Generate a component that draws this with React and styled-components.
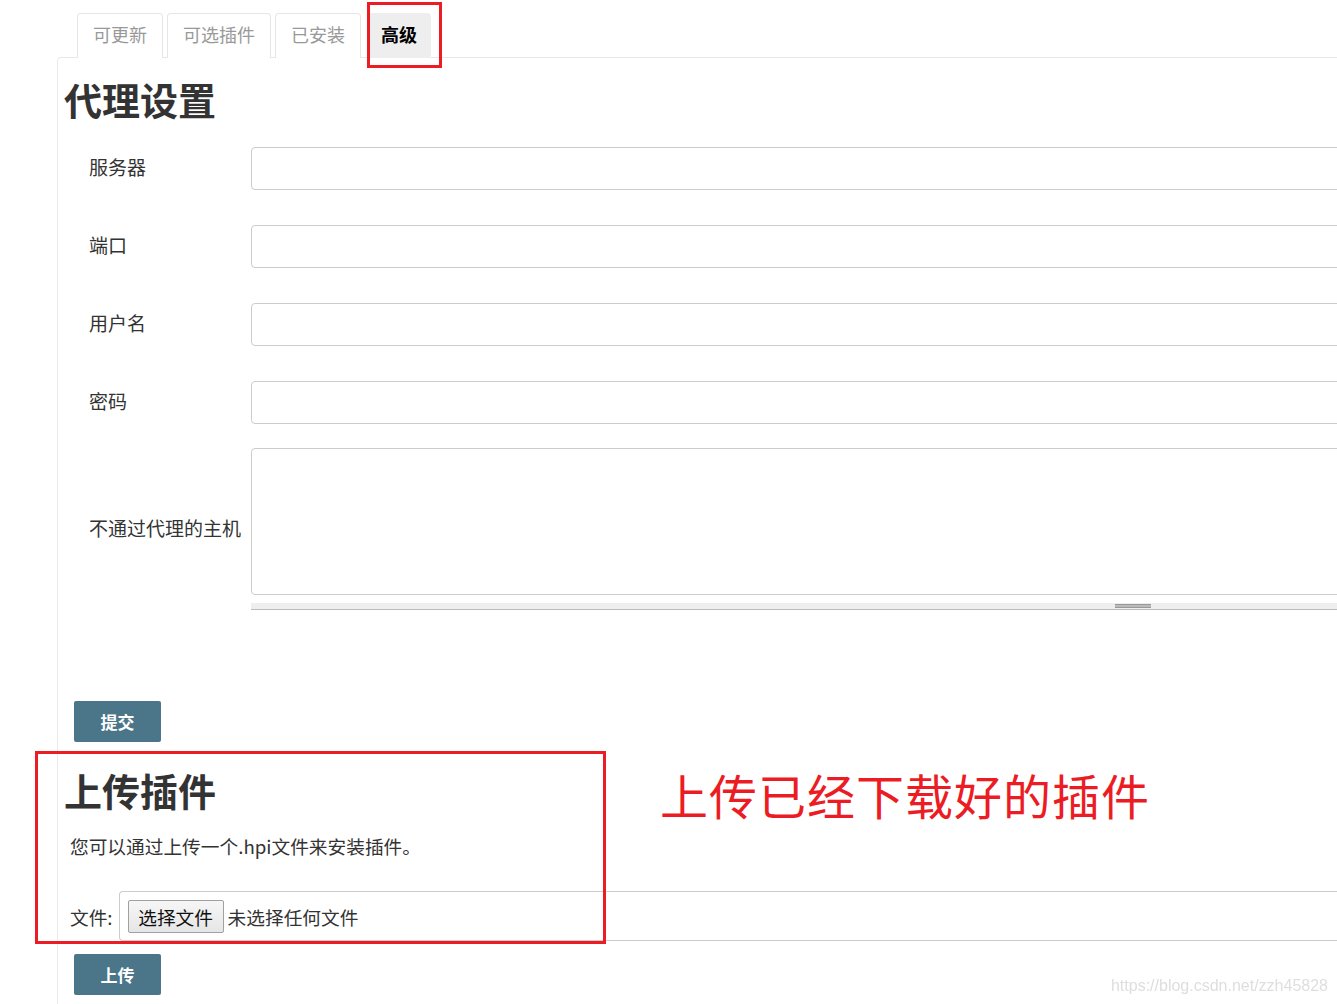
import styled, { createGlobalStyle } from "styled-components";

const GlobalStyle = createGlobalStyle`
  html, body {
    margin: 0;
    padding: 0;
    overflow: hidden;
    background: #fff;
  }
  body {
    font-family: "Noto Sans CJK SC", "Noto Sans", "Liberation Sans", sans-serif;
    color: #333;
  }
`;

const ANNOTATION_RED = "#ec1c24";

const Page = styled.div`
  width: 1420px;
  padding-top: 13px;
  position: relative;
`;

const Tabs = styled.ul`
  display: flex;
  gap: 4px;
  list-style: none;
  margin: 0;
  padding: 0 0 0 77px;
`;

const Tab = styled.li`
  position: relative;
  z-index: 1;
  box-sizing: border-box;
  height: 45px;
  margin-bottom: -1px;
  margin-left: ${(p) => (p.$active ? "2px" : "0")};
  padding: 0 ${(p) => (p.$active ? "13px" : "15px")};
  border: 1px solid ${(p) => (p.$active ? "#eee" : "#e6e6e6")};
  border-bottom: none;
  border-radius: 4px 4px 0 0;
  background: ${(p) => (p.$active ? "#eee" : "#fff")};
  color: ${(p) => (p.$active ? "#000" : "#999")};
  font-size: 18px;
  font-weight: ${(p) => (p.$active ? 700 : 400)};
  line-height: 41px;

  ${(p) =>
    p.$active &&
    `
    &::after {
      content: "";
      position: absolute;
      left: -1px;
      top: -12px;
      width: 75px;
      height: 66px;
      box-sizing: border-box;
      border: 3px solid ${ANNOTATION_RED};
    }
  `}
`;

const Panel = styled.div`
  margin-left: 57px;
  padding: 0 0 40px 6px;
  border-top: 1px solid #e8e8e8;
  border-left: 1px solid #ebebeb;
  border-top-left-radius: 4px;
`;

const Heading = styled.h2`
  margin: ${(p) => p.$top || "18px"} 0 0;
  font-size: 38px;
  line-height: 46px;
  font-weight: 700;
  color: #333;
`;

const Form = styled.div`
  margin-top: 25px;
  padding-left: 25px;
  display: flex;
  flex-direction: column;
`;

const Row = styled.div`
  display: grid;
  grid-template-columns: 162px 1fr;
  align-items: center;
  margin-top: ${(p) => p.$gap || "0"};
`;

const Label = styled.label`
  margin-bottom: 4px;
  font-size: 19px;
  color: #333;
  white-space: nowrap;
`;

const Input = styled.input`
  box-sizing: border-box;
  width: 100%;
  height: 43px;
  border: 1px solid #ccc;
  border-radius: 4px;
  background: #fff;
  font: inherit;
`;

const AreaBlock = styled.div`
  display: flex;
  flex-direction: column;
`;

const TextArea = styled.textarea`
  box-sizing: border-box;
  width: 100%;
  height: 147px;
  border: 1px solid #ccc;
  border-radius: 4px;
  resize: none;
  font: inherit;
`;

const ResizeBar = styled.div`
  box-sizing: border-box;
  height: 7px;
  margin-top: 8px;
  background: #eee;
  border-bottom: 1px solid #bbb;
  display: flex;
  align-items: flex-start;
`;

const Grip = styled.div`
  box-sizing: border-box;
  width: 36px;
  height: 4px;
  margin: 1px 0 0 864px;
  border-top: 1px solid #999;
  border-bottom: 1px solid #999;
  background: #bbb;
`;

const Button = styled.button`
  display: block;
  box-sizing: border-box;
  width: 87px;
  height: 41px;
  margin: ${(p) => p.$top} 0 0 10px;
  border: none;
  border-radius: 2px;
  background: #4b7588;
  color: #fff;
  font-family: inherit;
  font-size: 17px;
  font-weight: 700;
`;

const UploadSection = styled.section`
  position: relative;
  margin-top: 11px;
  padding-top: 1px;

  &::before {
    content: "";
    position: absolute;
    left: -29px;
    top: -2px;
    width: 571px;
    height: 193px;
    box-sizing: border-box;
    border: 3px solid ${ANNOTATION_RED};
    pointer-events: none;
  }
`;

const Note = styled.span`
  position: absolute;
  left: 596px;
  top: 17px;
  font-size: 48px;
  line-height: 48px;
  letter-spacing: 1px;
  color: ${ANNOTATION_RED};
  white-space: nowrap;
`;

const Paragraph = styled.p`
  margin: 19px 0 0 6px;
  font-size: 18.7px;
  line-height: 28px;
  color: #333;
`;

const FileRow = styled.div`
  display: flex;
  align-items: center;
  gap: 6px;
  margin: 31px 0 0 6px;
  font-size: 18.7px;
  color: #333;
`;

const FileBox = styled.div`
  flex: 1;
  box-sizing: border-box;
  height: 50px;
  display: flex;
  align-items: center;
  gap: 4px;
  padding-left: 8px;
  border: 1px solid #ccc;
  border-right: none;
  border-radius: 4px 0 0 4px;
`;

const ChooseButton = styled.span`
  box-sizing: border-box;
  display: inline-flex;
  align-items: center;
  justify-content: center;
  width: 96px;
  height: 33px;
  border: 1px solid #a0a0a0;
  border-radius: 2px;
  background: linear-gradient(#f6f6f6, #e6e6e6);
  color: #111;
  font-size: 18.7px;
`;

const Watermark = styled.div`
  position: fixed;
  right: 9px;
  bottom: 9px;
  font-family: "Liberation Sans", Arial, sans-serif;
  font-size: 16px;
  color: #dedede;
`;

const fields = ["服务器", "端口", "用户名", "密码"];

export default function App() {
  return (
    <Page>
      <GlobalStyle />
      <Tabs>
        <Tab>可更新</Tab>
        <Tab>可选插件</Tab>
        <Tab>已安装</Tab>
        <Tab $active>高级</Tab>
      </Tabs>
      <Panel>
        <Heading>代理设置</Heading>
        <Form>
          {fields.map((name, i) => (
            <Row key={name} $gap={i === 0 ? "0" : "35px"}>
              <Label>{name}</Label>
              <Input type={name === "密码" ? "password" : "text"} />
            </Row>
          ))}
          <Row $gap="24px">
            <Label>不通过代理的主机</Label>
            <AreaBlock>
              <TextArea />
              <ResizeBar>
                <Grip />
              </ResizeBar>
            </AreaBlock>
          </Row>
        </Form>
        <Button $top="91px">提交</Button>
        <UploadSection>
          <Note>上传已经下载好的插件</Note>
          <Heading $top="13px">上传插件</Heading>
          <Paragraph>您可以通过上传一个.hpi文件来安装插件。</Paragraph>
          <FileRow>
            <span>文件:</span>
            <FileBox>
              <ChooseButton>选择文件</ChooseButton>
              <span>未选择任何文件</span>
            </FileBox>
          </FileRow>
          <Button $top="13px">上传</Button>
        </UploadSection>
      </Panel>
      <Watermark>https://blog.csdn.net/zzh45828</Watermark>
    </Page>
  );
}
